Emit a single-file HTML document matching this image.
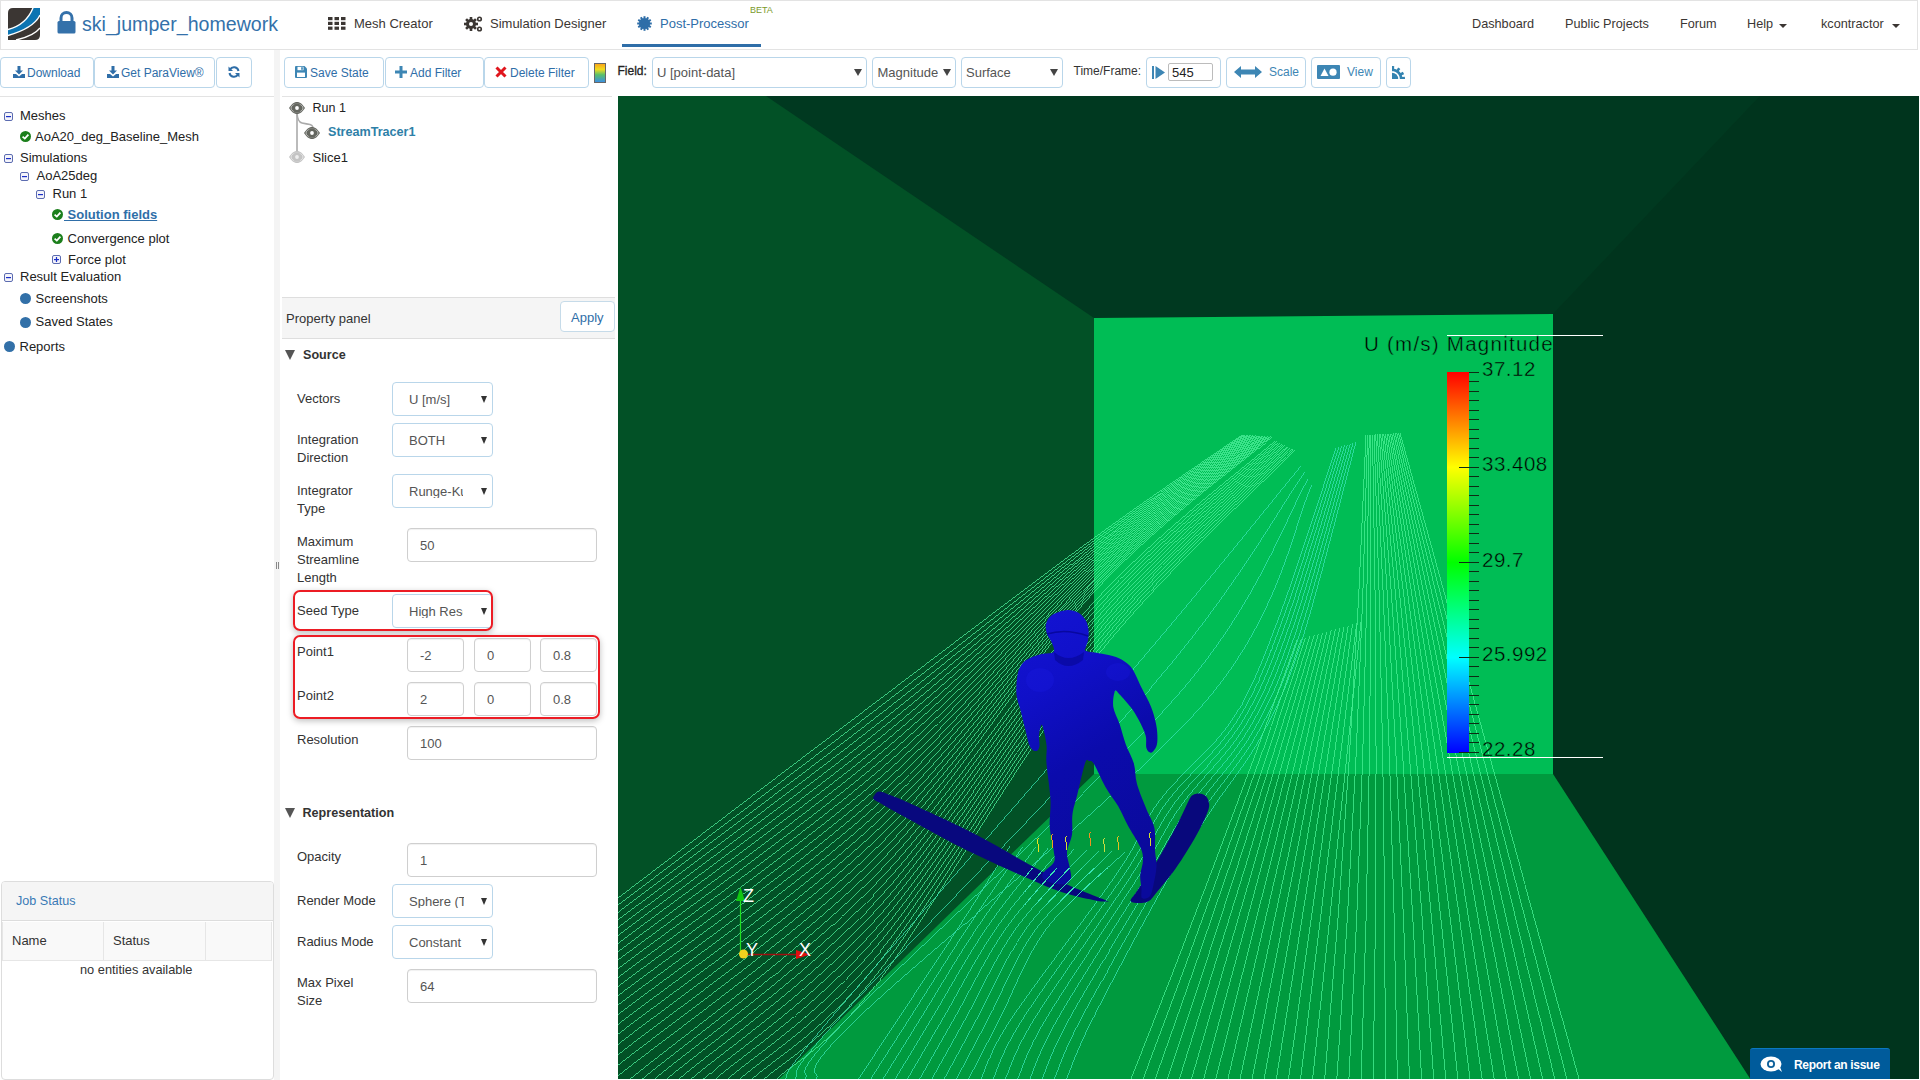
<!DOCTYPE html>
<html><head><meta charset="utf-8">
<style>
*{box-sizing:border-box}
html,body{margin:0;padding:0;width:1920px;height:1080px;overflow:hidden;background:#fff;font-family:"Liberation Sans",sans-serif;color:#333}
.a{position:absolute}
.t{position:absolute;line-height:1;white-space:nowrap}
.btn{position:absolute;border:1px solid #b9d6ea;border-radius:4px;background:#fff}
.sel{position:absolute;border:1px solid #b9d6ea;border-radius:4px;background:#fff}
.inp{position:absolute;border:1px solid #cfcfcf;border-radius:4px;background:#fff;box-shadow:inset 0 1px 1px rgba(0,0,0,.06)}
.blue{color:#2f6ea8}
.lbl{position:absolute;line-height:18px;font-size:13px;color:#333;white-space:nowrap}
.val{position:absolute;line-height:1;font-size:13px;color:#555;white-space:nowrap}
.arr{position:absolute;width:0;height:0;border-left:3.5px solid transparent;border-right:3.5px solid transparent;border-top:7px solid #333}
</style></head><body>

<!-- ================= HEADER ================= -->
<div class="a" style="left:0;top:0;width:1918px;height:50px;border:1px solid #e3e3e3;border-bottom:1px solid #e3e3e3;background:#fff"></div>
<!-- logo -->
<svg class="a" style="left:8px;top:8px" width="32" height="32" viewBox="0 0 32 32">
  <path d="M0 5 Q0 0 5 0 H32 V27 Q32 32 27 32 H0 Z" fill="#3b3633"/>
  <path d="M0 21.5 Q18 17 25 0 H32 V7 Q26 20 0 27.5 Z" fill="#0b74b2"/>
  <path d="M0 21.5 Q18 17 25 0" stroke="#fff" stroke-width="1.4" fill="none"/>
  <path d="M0 27.5 Q26 20 32 7" stroke="#fff" stroke-width="1.4" fill="none"/>
  <path d="M8 32 Q26 28 32 20" stroke="#fff" stroke-width="1.3" fill="none"/>
</svg>
<!-- lock -->
<svg class="a" style="left:57px;top:11px" width="19" height="23" viewBox="0 0 19 23">
  <path d="M4 10 V7 A5.5 5.5 0 0 1 15 7 V10" stroke="#3471aa" stroke-width="3" fill="none"/>
  <rect x="0.5" y="10" width="18" height="12.5" rx="1.5" fill="#3471aa"/>
</svg>
<div class="t" style="left:82px;top:15.2px;font-size:19.6px;color:#3471aa">ski_jumper_homework</div>

<!-- nav: mesh creator -->
<svg class="a" style="left:328px;top:17px" width="18" height="13" viewBox="0 0 18 13">
  <g fill="#3b3633">
  <rect x="0" y="0" width="4.5" height="3.2"/><rect x="6.5" y="0" width="4.5" height="3.2"/><rect x="13" y="0" width="4.5" height="3.2"/>
  <rect x="0" y="4.8" width="4.5" height="3.2"/><rect x="6.5" y="4.8" width="4.5" height="3.2"/><rect x="13" y="4.8" width="4.5" height="3.2"/>
  <rect x="0" y="9.6" width="4.5" height="3.2"/><rect x="6.5" y="9.6" width="4.5" height="3.2"/><rect x="13" y="9.6" width="4.5" height="3.2"/>
  </g>
</svg>
<div class="t" style="left:354px;top:16.5px;font-size:13px;color:#3b3633">Mesh Creator</div>
<!-- gears -->
<svg class="a" style="left:464px;top:15px" width="20" height="18" viewBox="0 0 20 18">
  <g fill="#3b3633">
   <circle cx="7" cy="9" r="5"/>
   <g transform="translate(7 9)"><rect x="-1.3" y="-7" width="2.6" height="14"/><rect x="-1.3" y="-7" width="2.6" height="14" transform="rotate(45)"/><rect x="-1.3" y="-7" width="2.6" height="14" transform="rotate(90)"/><rect x="-1.3" y="-7" width="2.6" height="14" transform="rotate(135)"/></g>
   <circle cx="15.5" cy="4" r="2.6"/><circle cx="15.5" cy="14" r="2.6"/>
  </g>
  <circle cx="7" cy="9" r="2" fill="#fff"/><circle cx="15.5" cy="4" r="1" fill="#fff"/><circle cx="15.5" cy="14" r="1" fill="#fff"/>
</svg>
<div class="t" style="left:490px;top:16.5px;font-size:13px;color:#3b3633">Simulation Designer</div>
<!-- post-processor -->
<svg class="a" style="left:637px;top:16px" width="15" height="15" viewBox="-7.5 -7.5 15 15">
  <g fill="#2f6ea8"><circle r="5.6"/>
  <g id="sp"><rect x="-1" y="-7.3" width="2" height="14.6"/><rect x="-1" y="-7.3" width="2" height="14.6" transform="rotate(30)"/><rect x="-1" y="-7.3" width="2" height="14.6" transform="rotate(60)"/><rect x="-1" y="-7.3" width="2" height="14.6" transform="rotate(90)"/><rect x="-1" y="-7.3" width="2" height="14.6" transform="rotate(120)"/><rect x="-1" y="-7.3" width="2" height="14.6" transform="rotate(150)"/></g></g>
</svg>
<div class="t" style="left:660px;top:16.5px;font-size:13px;color:#2f6ea8">Post-Processor</div>
<div class="t" style="left:750px;top:6px;font-size:9px;color:#7a9a2a">BETA</div>
<div class="a" style="left:622px;top:44px;width:139px;height:3px;background:#2f6ea8"></div>

<!-- right nav -->
<div class="t" style="left:1472px;top:18px;font-size:12.7px;color:#3b3633">Dashboard</div>
<div class="t" style="left:1565px;top:18px;font-size:12.7px;color:#3b3633">Public Projects</div>
<div class="t" style="left:1680px;top:18px;font-size:12.7px;color:#3b3633">Forum</div>
<div class="t" style="left:1747px;top:18px;font-size:12.7px;color:#3b3633">Help</div>
<div class="arr" style="left:1779px;top:24px;border-top-width:4px;border-left-width:4px;border-right-width:4px;border-top-color:#3b3633"></div>
<div class="t" style="left:1821px;top:18px;font-size:12.7px;color:#3b3633">kcontractor</div>
<div class="arr" style="left:1892px;top:24px;border-top-width:4px;border-left-width:4px;border-right-width:4px;border-top-color:#3b3633"></div>

<!-- ================= LEFT PANEL ================= -->
<div class="a" style="left:274px;top:50px;width:6px;height:1030px;background:#f4f4f4"></div>
<div class="a" style="left:0;top:96px;width:274px;height:1px;background:#e3e3e3"></div>

<!-- toolbar buttons -->
<div class="btn" style="left:0;top:57px;width:94px;height:31px"></div>
<svg class="a" style="left:13px;top:66px" width="12" height="12" viewBox="0 0 12 12"><path d="M4.5 0 H7.5 V4.5 H10 L6 8.5 L2 4.5 H4.5 Z" fill="#2f6ea8"/><path d="M0 8 H3 L6 10.5 L9 8 H12 V12 H0 Z" fill="#2f6ea8"/></svg>
<div class="t blue" style="left:27px;top:67px;font-size:12px">Download</div>
<div class="btn" style="left:94px;top:57px;width:121px;height:31px"></div>
<svg class="a" style="left:107px;top:66px" width="12" height="12" viewBox="0 0 12 12"><path d="M4.5 0 H7.5 V4.5 H10 L6 8.5 L2 4.5 H4.5 Z" fill="#2f6ea8"/><path d="M0 8 H3 L6 10.5 L9 8 H12 V12 H0 Z" fill="#2f6ea8"/></svg>
<div class="t blue" style="left:121px;top:67px;font-size:12px">Get ParaView®</div>
<div class="btn" style="left:216px;top:57px;width:36px;height:31px"></div>
<svg class="a" style="left:228px;top:66px" width="12" height="12" viewBox="0 0 12 12"><path d="M10.5 5 A4.6 4.6 0 0 0 2 3.5" stroke="#2f6ea8" stroke-width="2" fill="none"/><path d="M0.5 0.5 V5 H5 Z" fill="#2f6ea8"/><path d="M1.5 7 A4.6 4.6 0 0 0 10 8.5" stroke="#2f6ea8" stroke-width="2" fill="none"/><path d="M11.5 11.5 V7 H7 Z" fill="#2f6ea8"/></svg>

<!-- tree -->
<svg width="0" height="0" style="position:absolute"><defs>
 <g id="minus"><rect x="0.5" y="0.5" width="8" height="8" rx="1.5" fill="#f4f4fa" stroke="#5c6cb0" stroke-width="1"/><rect x="2" y="4" width="5" height="1.2" fill="#1b2fc8"/></g>
 <g id="plus"><rect x="0.5" y="0.5" width="8" height="8" rx="1.5" fill="#f4f4fa" stroke="#5c6cb0" stroke-width="1"/><rect x="2" y="4" width="5" height="1.2" fill="#1b2fc8"/><rect x="3.9" y="2" width="1.2" height="5" fill="#1b2fc8"/></g>
 <g id="chk"><circle cx="5.5" cy="5.5" r="5.5" fill="#1c7f1c"/><path d="M2.6 5.6 L4.8 7.6 L8.4 3.6" stroke="#fff" stroke-width="1.8" fill="none"/></g>
</defs></svg>
<svg class="a" style="left:4px;top:112px" width="9" height="9"><use href="#minus"/></svg>
<div class="t" style="left:20px;top:108.6px;font-size:13px;color:#222">Meshes</div>
<svg class="a" style="left:20px;top:131px" width="11" height="11"><use href="#chk"/></svg>
<div class="t" style="left:35px;top:129.7px;font-size:13px;color:#222">AoA20_deg_Baseline_Mesh</div>
<svg class="a" style="left:4px;top:154px" width="9" height="9"><use href="#minus"/></svg>
<div class="t" style="left:20px;top:150.6px;font-size:13px;color:#222">Simulations</div>
<svg class="a" style="left:20px;top:172px" width="9" height="9"><use href="#minus"/></svg>
<div class="t" style="left:36.5px;top:168.6px;font-size:13px;color:#222">AoA25deg</div>
<svg class="a" style="left:36px;top:190px" width="9" height="9"><use href="#minus"/></svg>
<div class="t" style="left:52.5px;top:186.7px;font-size:13px;color:#222">Run 1</div>
<svg class="a" style="left:52px;top:208.5px" width="11" height="11"><use href="#chk"/></svg>
<div class="t" style="left:64px;top:207.8px;font-size:13px;color:#2f6ea8;font-weight:bold;text-decoration:underline">&nbsp;Solution fields</div>
<svg class="a" style="left:52px;top:232.5px" width="11" height="11"><use href="#chk"/></svg>
<div class="t" style="left:67.5px;top:231.5px;font-size:13px;color:#222">Convergence plot</div>
<svg class="a" style="left:52px;top:255px" width="9" height="9"><use href="#plus"/></svg>
<div class="t" style="left:68px;top:252.7px;font-size:13px;color:#222">Force plot</div>
<svg class="a" style="left:4px;top:273px" width="9" height="9"><use href="#minus"/></svg>
<div class="t" style="left:20px;top:270.2px;font-size:13px;color:#222">Result Evaluation</div>
<div class="a" style="left:20px;top:292.5px;width:11px;height:11px;border-radius:50%;background:#3270a8"></div>
<div class="t" style="left:35.5px;top:291.5px;font-size:13px;color:#222">Screenshots</div>
<div class="a" style="left:20px;top:316.5px;width:11px;height:11px;border-radius:50%;background:#3270a8"></div>
<div class="t" style="left:35.5px;top:315.2px;font-size:13px;color:#222">Saved States</div>
<div class="a" style="left:4px;top:340.5px;width:11px;height:11px;border-radius:50%;background:#3270a8"></div>
<div class="t" style="left:19.5px;top:339.5px;font-size:13px;color:#222">Reports</div>

<!-- job status -->
<div class="a" style="left:1px;top:881px;width:273px;height:199px;border:1px solid #dddddd;border-radius:4px;background:#fff;overflow:hidden">
  <div class="a" style="left:0;top:0;width:271px;height:39px;background:#f5f5f5;border-bottom:1px solid #dddddd"></div>
  <div class="a" style="left:0;top:40px;width:270px;height:39px;background:#f9f9f9;border-bottom:1px solid #e6e6e6"></div>
  <div class="a" style="left:101px;top:40px;width:1px;height:39px;background:#e6e6e6"></div>
  <div class="a" style="left:203px;top:40px;width:1px;height:39px;background:#e6e6e6"></div>
  <div class="a" style="left:269px;top:40px;width:1px;height:39px;background:#e6e6e6"></div>
  <div class="a" style="left:0;top:40px;width:1px;height:39px;background:#e6e6e6"></div>
</div>
<div class="t" style="left:16px;top:895px;font-size:12.6px;color:#3a7ab5">Job Status</div>
<div class="t" style="left:12px;top:933.5px;font-size:13px;color:#333">Name</div>
<div class="t" style="left:113px;top:933.5px;font-size:13px;color:#333">Status</div>
<div class="t" style="left:80px;top:963.5px;font-size:12.8px;color:#333">no entities available</div>


<!-- ================= MIDDLE PANEL ================= -->
<div class="a" style="left:282px;top:96px;width:330px;height:1px;background:#e3e3e3"></div>

<!-- toolbar -->
<div class="btn" style="left:284px;top:57px;width:100px;height:31px"></div>
<svg class="a" style="left:295px;top:66px" width="12" height="12" viewBox="0 0 12 12"><path d="M0 1 Q0 0 1 0 H9.5 L12 2.5 V11 Q12 12 11 12 H1 Q0 12 0 11 Z" fill="#3d86b4"/><rect x="2.5" y="0.8" width="6" height="3.4" fill="#fff"/><rect x="6.2" y="1.2" width="1.6" height="2.6" fill="#3d86b4"/><rect x="2" y="6.6" width="8" height="4.4" fill="#fff"/></svg>
<div class="t blue" style="left:310px;top:67px;font-size:12px">Save State</div>
<div class="btn" style="left:385px;top:57px;width:99px;height:31px"></div>
<svg class="a" style="left:395px;top:66px" width="12" height="12" viewBox="0 0 12 12"><rect x="4.5" y="0" width="3" height="12" fill="#3d86b4"/><rect x="0" y="4.5" width="12" height="3" fill="#3d86b4"/></svg>
<div class="t blue" style="left:410px;top:67px;font-size:12px">Add Filter</div>
<div class="btn" style="left:484px;top:57px;width:105px;height:31px"></div>
<svg class="a" style="left:495px;top:66px" width="12" height="12" viewBox="0 0 12 12"><path d="M1.5 1.5 L10.5 10.5 M10.5 1.5 L1.5 10.5" stroke="#e0161d" stroke-width="3"/></svg>
<div class="t blue" style="left:510px;top:67px;font-size:12px">Delete Filter</div>
<div class="a" style="left:594px;top:63px;width:12px;height:20px;border:1px solid #666;background:linear-gradient(#f9a61b,#f2dc1f 30%,#58c06a 60%,#3c8fe0 100%)"></div>

<!-- pipeline tree -->
<svg class="a" style="left:286px;top:98px" width="40" height="70" viewBox="0 0 40 70">
  <path d="M11 15 V54" stroke="#aaa" stroke-width="1.6" fill="none"/>
  <path d="M11 15 Q11.5 24 16 25 Q21 26 24 26.5 Q26 27 27 29" stroke="#aaa" stroke-width="1.6" fill="none"/>
</svg>
<svg width="0" height="0" style="position:absolute"><defs>
 <g id="eye"><path d="M0 6 C3 1.5 5.5 0 8 0 C10.5 0 13 1.5 16 6 C13 10.5 10.5 12 8 12 C5.5 12 3 10.5 0 6Z" fill="#656760"/><ellipse cx="8" cy="6" rx="6" ry="4" fill="none" stroke="#fff" stroke-width="0.7" stroke-opacity="0.8"/><circle cx="8" cy="6" r="4.5" fill="#656760"/><circle cx="8" cy="6" r="1.9" fill="#fff"/></g>
 <g id="eyeg"><path d="M0 6 C3 1.5 5.5 0 8 0 C10.5 0 13 1.5 16 6 C13 10.5 10.5 12 8 12 C5.5 12 3 10.5 0 6Z" fill="#c4c4c4"/><ellipse cx="8" cy="6" rx="6" ry="4" fill="none" stroke="#fff" stroke-width="0.7" stroke-opacity="0.8"/><circle cx="8" cy="6" r="4.5" fill="#c4c4c4"/><circle cx="8" cy="6" r="1.9" fill="#eee"/></g>
</defs></svg>
<svg class="a" style="left:289.3px;top:101.5px" width="16" height="12"><use href="#eye"/></svg>
<div class="t" style="left:312.5px;top:101.5px;font-size:12.5px;color:#222">Run 1</div>
<svg class="a" style="left:304.4px;top:126.5px" width="16" height="12"><use href="#eye"/></svg>
<div class="t" style="left:328px;top:126px;font-size:12.6px;color:#2e80a8;font-weight:bold">StreamTracer1</div>
<svg class="a" style="left:289.3px;top:151px" width="16" height="12"><use href="#eyeg"/></svg>
<div class="t" style="left:312.5px;top:151px;font-size:13px;color:#222">Slice1</div>

<!-- property panel header -->
<div class="a" style="left:282px;top:297px;width:333px;height:42px;background:#f5f5f5;border-top:1px solid #dedede;border-bottom:1px solid #dedede"></div>
<div class="t" style="left:286px;top:311.5px;font-size:13px;color:#333">Property panel</div>
<div class="btn" style="left:560px;top:301px;width:55px;height:31px;border-color:#c6dbe9"></div>
<div class="t blue" style="left:571px;top:310.5px;font-size:13px">Apply</div>

<!-- source section -->
<div class="arr" style="left:285px;top:350px;border-left-width:5.5px;border-right-width:5.5px;border-top-width:10px;border-top-color:#555"></div>
<div class="t" style="left:303px;top:349.2px;font-size:12.6px;color:#333;font-weight:bold">Source</div>

<div class="lbl" style="left:297px;top:389.5px">Vectors</div>
<div class="sel" style="left:392px;top:382px;width:101px;height:34px"></div>
<div class="val" style="left:409px;top:393px">U [m/s]</div>
<div class="arr" style="left:481px;top:396px"></div>

<div class="lbl" style="left:297px;top:430.5px">Integration<br>Direction</div>
<div class="sel" style="left:392px;top:423px;width:101px;height:34px"></div>
<div class="val" style="left:409px;top:434px">BOTH</div>
<div class="arr" style="left:481px;top:437px"></div>

<div class="lbl" style="left:297px;top:481.5px">Integrator<br>Type</div>
<div class="sel" style="left:392px;top:474px;width:101px;height:34px"></div>
<div class="val" style="left:409px;top:485px;width:54px;overflow:hidden">Runge-Kutta</div>
<div class="arr" style="left:481px;top:488px"></div>

<div class="lbl" style="left:297px;top:532.5px">Maximum<br>Streamline<br>Length</div>
<div class="inp" style="left:407px;top:528px;width:190px;height:34px"></div>
<div class="val" style="left:420px;top:539px">50</div>

<div class="lbl" style="left:297px;top:601.5px">Seed Type</div>
<div class="sel" style="left:392px;top:594px;width:101px;height:34px"></div>
<div class="val" style="left:409px;top:605px;width:54px;overflow:hidden">High Resolution</div>
<div class="arr" style="left:481px;top:608px"></div>

<div class="lbl" style="left:297px;top:642.5px">Point1</div>
<div class="inp" style="left:407px;top:638px;width:57px;height:34px"></div>
<div class="val" style="left:420px;top:649px">-2</div>
<div class="inp" style="left:474px;top:638px;width:57px;height:34px"></div>
<div class="val" style="left:487px;top:649px">0</div>
<div class="inp" style="left:540px;top:638px;width:57px;height:34px"></div>
<div class="val" style="left:553px;top:649px">0.8</div>

<div class="lbl" style="left:297px;top:686.5px">Point2</div>
<div class="inp" style="left:407px;top:682px;width:57px;height:34px"></div>
<div class="val" style="left:420px;top:693px">2</div>
<div class="inp" style="left:474px;top:682px;width:57px;height:34px"></div>
<div class="val" style="left:487px;top:693px">0</div>
<div class="inp" style="left:540px;top:682px;width:57px;height:34px"></div>
<div class="val" style="left:553px;top:693px">0.8</div>

<div class="lbl" style="left:297px;top:730.5px">Resolution</div>
<div class="inp" style="left:407px;top:726px;width:190px;height:34px"></div>
<div class="val" style="left:420px;top:737px">100</div>

<!-- red highlight boxes -->
<div class="a" style="left:292.5px;top:590px;width:200px;height:41px;border:2px solid #ec1c24;border-radius:7px;box-shadow:0 2px 6px rgba(0,0,0,.25)"></div>
<div class="a" style="left:292.5px;top:635px;width:307.5px;height:84px;border:2px solid #ec1c24;border-radius:7px;box-shadow:0 2px 6px rgba(0,0,0,.25)"></div>

<!-- representation -->
<div class="arr" style="left:285px;top:808px;border-left-width:5.5px;border-right-width:5.5px;border-top-width:10px;border-top-color:#555"></div>
<div class="t" style="left:302.5px;top:807px;font-size:12.6px;color:#333;font-weight:bold">Representation</div>

<div class="lbl" style="left:297px;top:847.5px">Opacity</div>
<div class="inp" style="left:407px;top:843px;width:190px;height:34px"></div>
<div class="val" style="left:420px;top:854px">1</div>

<div class="lbl" style="left:297px;top:891.5px">Render Mode</div>
<div class="sel" style="left:392px;top:884px;width:101px;height:34px"></div>
<div class="val" style="left:409px;top:895px;width:55px;overflow:hidden">Sphere (Texture)</div>
<div class="arr" style="left:481px;top:898px"></div>

<div class="lbl" style="left:297px;top:932.5px">Radius Mode</div>
<div class="sel" style="left:392px;top:925px;width:101px;height:34px"></div>
<div class="val" style="left:409px;top:936px">Constant</div>
<div class="arr" style="left:481px;top:939px"></div>

<div class="lbl" style="left:297px;top:973.5px">Max Pixel<br>Size</div>
<div class="inp" style="left:407px;top:969px;width:190px;height:34px"></div>
<div class="val" style="left:420px;top:980px">64</div>

<!-- resize handle -->
<div class="a" style="left:276px;top:562px;width:1px;height:7px;background:#888"></div>
<div class="a" style="left:278px;top:562px;width:1px;height:7px;background:#888"></div>

<!-- field toolbar -->
<div class="t" style="left:617.5px;top:65px;font-size:12px;color:#222;-webkit-text-stroke:0.3px #222">Field:</div>
<div class="sel" style="left:652px;top:57px;width:215px;height:31px"></div>
<div class="val" style="left:657px;top:65.5px">U [point-data]</div>
<div class="arr" style="left:854px;top:69px;border-left-width:4px;border-right-width:4px;border-top-width:7px;border-top-color:#444"></div>
<div class="sel" style="left:872px;top:57px;width:84px;height:31px"></div>
<div class="val" style="left:877.5px;top:65.5px">Magnitude</div>
<div class="arr" style="left:943px;top:69px;border-left-width:4px;border-right-width:4px;border-top-width:7px;border-top-color:#444"></div>
<div class="sel" style="left:961px;top:57px;width:102px;height:31px"></div>
<div class="val" style="left:966px;top:65.5px">Surface</div>
<div class="arr" style="left:1050px;top:69px;border-left-width:4px;border-right-width:4px;border-top-width:7px;border-top-color:#444"></div>
<div class="t" style="left:1073.5px;top:65px;font-size:12px;color:#333">Time/Frame:</div>
<div class="btn" style="left:1146px;top:57px;width:75px;height:31px"></div>
<svg class="a" style="left:1152px;top:66px" width="14" height="13" viewBox="0 0 14 13"><rect x="0" y="0" width="2" height="13" fill="#3d86b4"/><path d="M3.5 0 L13 6.5 L3.5 13 Z" fill="#3d86b4"/></svg>
<div class="a" style="left:1168px;top:63px;width:45px;height:18px;border:1px solid #bcbcbc;border-radius:2px"></div>
<div class="t" style="left:1172px;top:66px;font-size:13px;color:#222">545</div>
<div class="btn" style="left:1226px;top:57px;width:80px;height:31px"></div>
<svg class="a" style="left:1234px;top:66px" width="28" height="12" viewBox="0 0 28 12"><path d="M0 6 L7 0 V3.5 H21 V0 L28 6 L21 12 V8.5 H7 V12 Z" fill="#3d86b4"/></svg>
<div class="t" style="left:1269px;top:66px;font-size:12px;color:#3d86b4">Scale</div>
<div class="btn" style="left:1311px;top:57px;width:70px;height:31px"></div>
<svg class="a" style="left:1317px;top:65px" width="23" height="14" viewBox="0 0 23 14"><rect width="23" height="14" rx="1" fill="#3d86b4"/><path d="M3.5 11 L7.5 3.5 L11.5 11 Z" fill="#fff"/><circle cx="16" cy="7.2" r="3.6" fill="#fff"/></svg>
<div class="t" style="left:1347px;top:66px;font-size:12px;color:#3d86b4">View</div>
<div class="btn" style="left:1386px;top:57px;width:25px;height:31px"></div>
<svg class="a" style="left:1392px;top:66px" width="14" height="14" viewBox="0 0 14 14"><path d="M0.00 0.00 L0.23 0.00 L0.45 0.01 L0.68 0.02 L0.91 0.03 L1.13 0.05 L1.36 0.07 L1.58 0.10 L1.81 0.13 L2.03 0.16 L2.26 0.20 L2.00 2.69 L2.18 2.73 L2.36 2.77 L2.54 2.81 L2.72 2.86 L2.89 2.91 L3.07 2.96 L3.24 3.01 L3.42 3.07 L3.59 3.13 L3.76 3.20 L3.93 3.26 L4.10 3.33 L4.27 3.41 L4.44 3.48 L4.60 3.56 L4.77 3.64 L6.10 1.52 L6.30 1.63 L6.50 1.74 L6.70 1.86 L6.89 1.98 L7.08 2.10 L7.27 2.22 L7.46 2.35 L7.64 2.48 L7.82 2.62 L8.00 2.76 L8.18 2.90 L8.36 3.04 L6.89 5.08 L7.03 5.20 L7.16 5.32 L7.29 5.45 L7.42 5.58 L7.55 5.71 L7.68 5.84 L7.80 5.97 L7.92 6.11 L8.04 6.25 L8.16 6.39 L8.27 6.54 L8.39 6.68 L8.49 6.83 L8.60 6.98 L10.78 5.73 L10.90 5.92 L11.02 6.11 L11.14 6.30 L11.26 6.50 L11.37 6.70 L11.48 6.90 L11.58 7.10 L11.68 7.30 L11.78 7.51 L11.88 7.71 L11.97 7.92 L12.05 8.13 L9.80 9.24 L9.87 9.41 L9.93 9.58 L9.99 9.76 L10.04 9.93 L10.09 10.11 L10.14 10.28 L10.19 10.46 L10.23 10.64 L10.27 10.82 L10.31 11.00 L12.80 10.74 L12.84 10.97 L12.87 11.19 L12.90 11.42 L12.93 11.64 L12.95 11.87 L12.97 12.09 L12.98 12.32 L12.99 12.55 L13.00 12.77 L13.00 13.00 L7.80 13.00 L7.79 12.59 L7.76 12.18 L7.70 11.78 L7.63 11.38 L7.53 10.98 L7.42 10.59 L7.28 10.20 L7.13 9.83 L6.95 9.46 L6.75 9.10 L6.54 8.75 L6.31 8.42 L6.06 8.09 L5.80 7.78 L5.52 7.48 L5.22 7.20 L4.91 6.94 L4.58 6.69 L4.25 6.46 L3.90 6.25 L3.54 6.05 L3.17 5.87 L2.80 5.72 L2.41 5.58 L2.02 5.47 L1.62 5.37 L1.22 5.30 L0.82 5.24 L0.41 5.21 L0.00 5.20Z" fill="#3383b0"/><path d="M0 13 V6.8 A6.2 6.2 0 0 1 6.2 13 Z" fill="#3383b0"/></svg>


<!-- ================= VIEWPORT ================= -->
<svg class="a" style="left:618px;top:96px" width="1301" height="983" viewBox="618 96 1301 983" shape-rendering="geometricPrecision">
  <rect x="618" y="96" width="1302" height="984" fill="#003920"/>
  <!-- right wall -->
  <polygon points="1553,314 1760,96 1920,96 1920,1080 1751,1080 1553,774" fill="#00341d"/>
  <!-- left wall -->
  <polygon points="618,96 766,96 1094,318 1094,774 778,1080 618,1080" fill="#025126"/>
  <!-- back wall -->
  <polygon points="1094,318 1553,314 1553,774 1094,774" fill="#00bd55"/>
  <!-- floor -->
  <polygon points="1094,774 1553,774 1751,1080 778,1080" fill="#009a3e"/>
  <g fill="none" stroke-width="0.75" shape-rendering="crispEdges"><path d="M618.0 898.0 C661.7 864.8 800.7 759.0 880.0 699.0 C959.3 639.0 1033.7 582.0 1094.0 538.0 C1154.3 494.0 1217.3 452.2 1242.0 435.0 M618.0 905.1 C661.7 872.0 800.7 767.4 880.0 706.6 C959.3 645.9 1033.4 586.0 1094.0 540.7 C1154.6 495.4 1218.6 452.7 1243.5 435.1 M618.0 912.4 C661.7 879.4 800.7 775.8 880.0 714.3 C959.3 652.8 1033.2 589.9 1094.0 543.4 C1154.8 496.9 1219.8 453.2 1245.0 435.2 M618.0 919.9 C661.7 886.9 800.7 784.3 880.0 722.0 C959.3 659.8 1032.9 593.9 1094.0 546.1 C1155.1 498.3 1221.1 453.8 1246.5 435.3 M618.0 927.5 C661.7 894.6 800.7 793.0 880.0 729.8 C959.3 666.7 1032.7 597.9 1094.0 548.8 C1155.3 499.7 1222.3 454.3 1248.0 435.4 M618.0 935.4 C661.7 902.4 800.7 801.7 880.0 737.7 C959.3 673.7 1032.4 601.9 1094.0 551.5 C1155.6 501.1 1223.6 454.8 1249.5 435.5 M618.0 943.4 C661.7 910.4 800.7 810.5 880.0 745.6 C959.3 680.7 1032.2 605.9 1094.0 554.2 C1155.8 502.5 1224.8 455.4 1251.0 435.6 M618.0 951.7 C661.7 918.6 800.7 819.3 880.0 753.5 C959.3 687.7 1031.9 609.9 1094.0 556.9 C1156.1 503.9 1226.1 455.9 1252.5 435.7 M618.0 960.1 C661.7 927.0 800.7 828.3 880.0 761.5 C959.3 694.8 1031.7 613.9 1094.0 559.6 C1156.3 505.3 1227.3 456.4 1254.0 435.8 M618.0 968.7 C661.7 935.5 800.7 837.3 880.0 769.6 C959.3 701.9 1031.4 617.9 1094.0 562.3 C1156.6 506.7 1228.6 457.0 1255.5 435.9 M618.0 977.5 C661.7 944.2 800.7 846.5 880.0 777.7 C959.3 709.0 1031.2 622.0 1094.0 565.0 C1156.8 508.0 1229.8 457.5 1257.0 436.0 M618.0 986.5 C661.7 953.1 800.7 855.7 880.0 785.9 C959.3 716.1 1030.9 626.0 1094.0 567.7 C1157.1 509.4 1231.1 458.0 1258.5 436.1 M618.0 995.7 C661.7 962.1 800.7 865.0 880.0 794.1 C959.3 723.2 1030.7 630.1 1094.0 570.4 C1157.3 510.7 1232.3 458.6 1260.0 436.2 M618.0 1005.1 C661.7 971.3 800.7 874.4 880.0 802.4 C959.3 730.4 1030.4 634.1 1094.0 573.1 C1157.6 512.1 1233.6 459.1 1261.5 436.3 M618.0 1014.6 C661.7 980.6 800.7 883.9 880.0 810.7 C959.3 737.6 1030.2 638.2 1094.0 575.8 C1157.8 513.4 1234.8 459.6 1263.0 436.4 M618.0 1024.4 C661.7 990.2 800.7 893.4 880.0 819.1 C959.3 744.8 1029.9 642.3 1094.0 578.5 C1158.1 514.7 1236.1 460.2 1264.5 436.5 M618.0 1034.3 C661.7 999.9 800.7 903.1 880.0 827.6 C959.3 752.1 1029.7 646.4 1094.0 581.2 C1158.3 516.0 1237.3 460.7 1266.0 436.6 M618.0 1044.5 C661.7 1009.7 800.7 912.8 880.0 836.1 C959.3 759.3 1029.4 650.5 1094.0 583.9 C1158.6 517.3 1238.6 461.2 1267.5 436.7 M618.0 1054.8 C661.7 1019.8 800.7 922.7 880.0 844.6 C959.3 766.6 1029.2 654.6 1094.0 586.6 C1158.8 518.6 1239.8 461.8 1269.0 436.8 M618.0 1065.3 C661.7 1030.0 800.7 932.6 880.0 853.2 C959.3 773.9 1028.9 658.7 1094.0 589.3 C1159.1 519.9 1241.1 462.3 1270.5 436.9 M618.0 1076.0 C661.7 1040.3 800.7 942.6 880.0 861.9 C959.3 781.2 1028.7 662.8 1094.0 592.0 C1159.3 521.2 1242.3 462.8 1272.0 437.0 M630.2 1079.0 C671.8 1044.3 802.7 950.1 880.0 870.6 C957.3 791.1 1028.2 673.6 1094.0 602.0 C1159.8 530.4 1244.8 467.8 1275.0 441.0 M642.4 1079.0 C682.0 1045.7 804.7 958.1 880.0 879.4 C955.3 800.7 1027.9 679.8 1094.0 606.8 C1160.1 533.9 1246.2 469.3 1276.7 441.8 M654.6 1079.0 C692.2 1047.2 806.8 966.1 880.0 888.2 C953.2 810.3 1027.6 686.0 1094.0 611.7 C1160.4 537.4 1247.6 470.7 1278.3 442.5 M666.8 1079.0 C702.3 1048.7 808.8 974.2 880.0 897.1 C951.2 820.0 1027.3 692.1 1094.0 616.5 C1160.7 540.9 1249.0 472.1 1280.0 443.2 M679.0 1079.0 C712.5 1050.2 810.8 982.3 880.0 906.0 C949.2 829.8 1027.1 698.3 1094.0 621.3 C1160.9 544.3 1250.4 473.6 1281.7 444.0 M691.2 1079.0 C722.7 1051.7 812.9 990.5 880.0 915.0 C947.1 839.6 1026.8 704.5 1094.0 626.2 C1161.2 547.8 1251.8 475.0 1283.3 444.8 M703.4 1079.0 C732.8 1053.2 814.9 998.7 880.0 924.1 C945.1 849.4 1026.5 710.8 1094.0 631.0 C1161.5 551.2 1253.2 476.4 1285.0 445.5 M715.6 1079.0 C743.0 1054.7 816.9 1007.0 880.0 933.2 C943.1 859.3 1026.2 717.0 1094.0 635.8 C1161.8 554.7 1254.6 477.8 1286.7 446.2 M727.8 1079.0 C753.2 1056.2 819.0 1015.4 880.0 942.3 C941.0 869.3 1025.9 723.2 1094.0 640.7 C1162.1 558.1 1255.9 479.3 1288.3 447.0 M740.0 1079.0 C763.3 1057.8 821.0 1023.8 880.0 951.5 C939.0 879.3 1025.7 729.5 1094.0 645.5 C1162.3 561.5 1257.3 480.7 1290.0 447.8 M752.2 1079.0 C773.5 1059.3 823.0 1032.3 880.0 960.8 C937.0 889.4 1025.4 735.7 1094.0 650.3 C1162.6 564.9 1258.7 482.1 1291.7 448.5 M764.4 1079.0 C783.7 1060.9 825.1 1040.8 880.0 970.1 C934.9 899.5 1025.1 742.0 1094.0 655.2 C1162.9 568.4 1260.1 483.6 1293.3 449.2 M776.6 1079.0 C793.8 1062.4 827.1 1049.3 880.0 979.5 C932.9 909.7 1024.8 748.2 1094.0 660.0 C1163.2 571.8 1261.5 485.0 1295.0 450.0" stroke="#4ef09c"/><path d="M785.0 1079.0 C792.5 1069.0 771.6 1087.8 830.1 1019.0 C888.6 950.2 1057.5 758.2 1136.0 666.0 C1214.5 573.8 1273.5 499.3 1301.0 466.0 M795.0 1079.0 C802.3 1069.0 777.9 1085.9 838.6 1019.0 C899.3 952.1 1081.7 768.8 1159.3 677.7 C1237.0 586.6 1280.4 506.6 1304.7 472.3 M805.0 1079.0 C812.0 1069.0 784.2 1083.9 847.2 1019.0 C910.1 954.1 1105.8 779.4 1182.7 689.3 C1259.5 599.3 1287.4 513.8 1308.3 478.7 M816.0 1079.0 C822.8 1069.0 791.9 1082.0 856.9 1019.0 C921.9 956.0 1130.1 790.0 1206.0 701.0 C1281.9 612.0 1294.3 521.0 1312.0 485.0 M858.5 1079.0 C865.1 1069.0 881.6 1044.0 898.1 1019.0 C914.6 994.0 938.9 957.8 957.5 929.0 C976.2 900.2 1001.3 859.8 1010.0 846.0 M870.7 1079.0 C877.1 1069.0 893.2 1044.0 909.2 1019.0 C925.2 994.0 947.9 957.7 966.8 929.0 C985.8 900.3 1013.5 860.4 1022.8 846.7 M883.0 1079.0 C889.2 1069.0 904.7 1044.0 920.3 1019.0 C935.9 994.0 957.1 957.6 976.3 929.0 C995.5 900.4 1025.7 860.9 1035.6 847.3 M895.2 1079.0 C901.3 1069.0 916.4 1044.0 931.5 1019.0 C946.6 994.0 966.5 957.5 985.9 929.0 C1005.4 900.5 1037.9 861.5 1048.3 848.0 M907.4 1079.0 C913.3 1069.0 928.0 1044.0 942.7 1019.0 C957.5 994.0 976.0 957.4 995.7 929.0 C1015.4 900.6 1050.2 862.1 1061.1 848.7 M919.7 1079.0 C925.4 1069.0 939.7 1044.0 954.0 1019.0 C968.4 994.0 985.6 957.3 1005.6 929.0 C1025.6 900.7 1062.5 862.6 1073.9 849.3 M931.9 1079.0 C937.5 1069.0 951.4 1044.0 965.4 1019.0 C979.3 994.0 995.4 957.2 1015.6 929.0 C1035.8 900.8 1074.8 863.2 1086.7 850.0 M944.1 1079.0 C949.6 1069.0 963.2 1044.0 976.8 1019.0 C990.4 994.0 1005.3 957.1 1025.8 929.0 C1046.2 900.9 1087.2 863.7 1099.4 850.7 M956.4 1079.0 C961.7 1069.0 975.0 1044.0 988.2 1019.0 C1001.5 994.0 1015.3 956.9 1036.0 929.0 C1056.7 901.1 1099.5 864.3 1112.2 851.3 M968.6 1079.0 C973.8 1069.0 986.7 1044.0 999.7 1019.0 C1012.6 994.0 1025.4 956.8 1046.3 929.0 C1067.2 901.2 1111.9 864.8 1125.0 852.0 M980.9 1079.0 C985.9 1069.0 988.3 1053.5 1011.2 1019.0 C1034.1 984.5 1093.2 908.5 1118.0 872.0 C1142.8 835.5 1141.0 825.3 1160.0 800.0 C1179.0 774.7 1212.3 750.0 1232.0 720.0 C1251.7 690.0 1260.7 665.3 1278.0 620.0 C1295.3 574.7 1326.3 476.7 1336.0 448.0 M993.1 1079.0 C998.0 1069.0 1000.8 1053.2 1022.7 1019.0 C1044.7 984.8 1100.6 909.9 1124.7 873.7 C1148.8 837.5 1148.5 827.0 1167.1 801.7 C1185.7 776.5 1217.2 752.0 1236.3 722.1 C1255.3 692.3 1264.3 668.7 1281.4 622.9 C1298.5 577.0 1329.3 476.4 1338.9 447.1 M1005.3 1079.0 C1010.2 1069.0 1013.3 1052.9 1034.3 1019.0 C1055.3 985.1 1108.1 911.4 1131.4 875.4 C1154.8 839.5 1156.1 828.6 1174.3 803.4 C1192.5 778.2 1222.1 753.9 1240.6 724.3 C1259.0 694.7 1268.0 672.0 1284.9 625.7 C1301.7 579.4 1332.2 476.2 1341.7 446.3 M1017.6 1079.0 C1022.3 1069.0 1025.8 1052.6 1045.9 1019.0 C1066.0 985.4 1115.6 912.8 1138.1 877.1 C1160.7 841.5 1163.6 830.3 1181.4 805.1 C1199.2 780.0 1227.0 755.9 1244.9 726.4 C1262.7 697.0 1271.7 675.4 1288.3 628.6 C1304.9 581.7 1335.2 476.0 1344.6 445.4 M1029.8 1079.0 C1034.4 1069.0 1038.4 1052.4 1057.6 1019.0 C1076.7 985.6 1123.0 914.2 1144.9 878.9 C1166.7 843.5 1171.2 831.9 1188.6 806.9 C1206.0 781.8 1232.0 757.8 1249.1 728.6 C1266.3 699.3 1275.3 678.8 1291.7 631.4 C1308.1 584.1 1338.1 475.7 1347.4 444.6 M1042.0 1079.0 C1046.6 1069.0 1051.0 1052.1 1069.2 1019.0 C1087.5 985.9 1130.5 915.6 1151.6 880.6 C1172.7 845.5 1178.7 833.5 1195.7 808.6 C1212.7 783.6 1236.9 759.8 1253.4 730.7 C1270.0 701.7 1279.0 682.1 1295.1 634.3 C1311.3 586.5 1341.1 475.5 1350.3 443.7 M1054.3 1079.0 C1058.7 1069.0 1063.5 1051.8 1080.9 1019.0 C1098.2 986.2 1138.0 917.1 1158.3 882.3 C1178.6 847.5 1186.3 835.2 1202.9 810.3 C1219.4 785.4 1241.8 761.7 1257.7 732.9 C1273.7 704.0 1282.7 685.5 1298.6 637.1 C1314.5 588.8 1344.0 475.2 1353.1 442.9 M1066.5 1079.0 C1070.8 1069.0 1076.2 1051.5 1092.6 1019.0 C1109.0 986.5 1145.4 918.5 1165.0 884.0 C1184.6 849.5 1193.8 836.8 1210.0 812.0 C1226.2 787.2 1246.7 763.7 1262.0 735.0 C1277.3 706.3 1286.3 688.8 1302.0 640.0 C1317.7 591.2 1347.0 475.0 1356.0 442.0" stroke="#38e4b4"/><path d="M1131.0 1079.0 Q1217.7 860.9 1297.0 640.0 M1143.1 1079.0 Q1225.7 860.2 1301.3 638.8 M1155.2 1079.0 Q1233.7 859.4 1305.5 637.6 M1167.3 1079.0 Q1241.6 858.7 1309.8 636.4 M1179.4 1079.0 Q1249.6 858.0 1314.1 635.2 M1191.5 1079.0 Q1257.5 857.2 1318.3 634.0 M1203.6 1079.0 Q1265.4 856.5 1322.6 632.8 M1215.8 1079.0 Q1273.4 855.8 1326.9 631.6 M1227.9 1079.0 Q1281.3 855.1 1331.1 630.4 M1240.0 1079.0 Q1289.3 854.4 1335.4 629.2 M1252.1 1079.0 Q1297.2 853.8 1339.7 628.0 M1264.2 1079.0 Q1305.1 853.1 1343.9 626.8 M1276.3 1079.0 Q1313.0 852.4 1348.2 625.6 M1288.4 1079.0 Q1321.0 851.8 1352.5 624.4 M1300.5 1079.0 Q1328.9 851.1 1356.7 623.2 M1312.6 1079.0 Q1336.8 850.5 1361.0 622.0 M1324.7 1079.0 Q1353.3 757.5 1366.0 435.0 M1336.8 1079.0 Q1359.8 757.3 1367.6 434.9 M1348.9 1079.0 Q1366.3 757.1 1369.2 434.8 M1361.1 1079.0 Q1372.8 757.0 1370.9 434.7 M1373.2 1079.0 Q1379.3 756.8 1372.5 434.6 M1385.3 1079.0 Q1385.8 756.7 1374.1 434.5 M1397.4 1079.0 Q1392.3 756.5 1375.7 434.4 M1409.5 1079.0 Q1398.7 756.4 1377.3 434.3 M1421.6 1079.0 Q1405.2 756.3 1379.0 434.2 M1433.7 1079.0 Q1411.7 756.2 1380.6 434.1 M1445.8 1079.0 Q1418.2 756.1 1382.2 434.0 M1457.9 1079.0 Q1424.6 756.0 1383.8 434.0 M1470.0 1079.0 Q1431.1 756.0 1385.4 433.9 M1482.1 1079.0 Q1437.6 755.9 1387.0 433.8 M1494.2 1079.0 Q1444.1 755.9 1388.7 433.7 M1506.4 1079.0 Q1450.6 755.9 1390.3 433.6 M1518.5 1079.0 Q1457.1 755.9 1391.9 433.5 M1530.6 1079.0 Q1463.5 755.9 1393.5 433.4 M1542.7 1079.0 Q1470.0 755.9 1395.1 433.3 M1554.8 1079.0 Q1476.5 755.9 1396.8 433.2 M1566.9 1079.0 Q1483.0 756.0 1398.4 433.1 M1579.0 1079.0 Q1489.5 756.0 1400.0 433.0" stroke="#48f296"/></g>
  <defs><linearGradient id="bodyg" x1="0" y1="0" x2="0.3" y2="1">
<stop offset="0" stop-color="#1414d4"/><stop offset="0.3" stop-color="#1010c8"/><stop offset="0.6" stop-color="#0b0bac"/><stop offset="1" stop-color="#0a0a9c"/></linearGradient></defs>
<path d="M874.4 795.2 C875.3 794.0 876.4 791.5 879.0 791.5 C881.6 791.5 883.6 792.5 890.0 795.0 C896.4 797.5 903.3 800.2 917.4 806.7 C931.5 813.2 955.7 824.1 974.8 834.0 C993.9 843.9 1016.2 857.4 1032.0 866.0 C1047.8 874.6 1057.1 879.8 1069.4 885.5 C1081.7 891.2 1099.7 897.6 1105.6 900.3 C1111.5 903.0 1107.1 901.6 1105.0 901.6 C1102.9 901.6 1100.2 901.6 1093.0 900.0 C1085.8 898.4 1074.0 896.3 1061.5 892.0 C1049.0 887.7 1034.8 881.5 1018.0 874.0 C1001.2 866.5 979.7 856.7 960.5 847.0 C941.3 837.3 916.4 823.3 903.0 816.0 C889.6 808.7 884.9 805.8 880.0 803.0 C875.1 800.2 874.4 800.3 873.5 799.0 C872.6 797.7 873.5 796.5 874.4 795.2Z" fill="#08087e"/>
<path d="M1199.0 793.5 C1201.0 793.6 1203.4 794.2 1205.0 795.5 C1206.6 796.8 1208.0 798.4 1208.5 801.0 C1209.0 803.6 1210.1 805.2 1208.0 811.0 C1205.9 816.8 1201.3 826.5 1196.0 836.0 C1190.7 845.5 1182.5 858.7 1176.0 868.0 C1169.5 877.3 1161.8 886.3 1157.0 892.0 C1152.2 897.7 1151.3 900.4 1147.0 902.0 C1142.7 903.6 1132.7 903.3 1131.0 901.5 C1129.3 899.7 1132.7 897.8 1137.0 891.0 C1141.3 884.2 1150.2 872.3 1157.0 861.0 C1163.8 849.7 1172.7 833.2 1178.0 823.0 C1183.3 812.8 1186.5 804.7 1189.0 800.0 C1191.5 795.3 1191.3 796.1 1193.0 795.0 C1194.7 793.9 1197.0 793.4 1199.0 793.5Z" fill="#08087c"/>
<path d="M1066.1 610.2 C1070.4 609.8 1074.7 610.8 1078.0 612.5 C1081.3 614.2 1084.0 617.6 1085.8 620.5 C1087.5 623.4 1088.1 626.8 1088.5 630.0 C1088.9 633.2 1088.5 637.1 1088.1 640.0 C1087.6 642.9 1086.1 645.4 1085.8 647.2 C1085.5 649.0 1083.5 650.0 1086.0 651.0 C1088.5 652.0 1095.7 652.5 1100.7 653.5 C1105.7 654.5 1111.8 655.5 1116.0 657.0 C1120.2 658.5 1123.2 660.3 1126.0 662.5 C1128.8 664.7 1130.4 665.7 1133.0 670.0 C1135.6 674.3 1138.7 681.9 1141.7 688.1 C1144.7 694.3 1148.8 701.2 1151.1 707.0 C1153.4 712.8 1154.8 718.1 1155.8 722.8 C1156.8 727.5 1157.3 731.5 1157.4 735.4 C1157.5 739.3 1157.5 743.1 1156.5 746.0 C1155.5 748.9 1152.8 752.4 1151.1 752.7 C1149.4 753.0 1147.3 750.9 1146.4 748.0 C1145.5 745.1 1146.9 740.1 1145.6 735.4 C1144.3 730.7 1141.0 724.3 1138.5 719.6 C1136.0 714.9 1133.8 711.2 1130.6 707.0 C1127.4 702.8 1122.2 697.0 1119.6 694.4 C1117.0 691.8 1116.0 689.2 1114.9 691.3 C1113.9 693.4 1112.5 701.5 1113.3 707.0 C1114.1 712.5 1117.5 717.7 1119.6 724.0 C1121.7 730.3 1123.6 738.4 1126.0 745.0 C1128.4 751.6 1132.1 757.1 1133.9 763.6 C1135.7 770.1 1134.9 776.5 1137.0 784.1 C1139.1 791.7 1143.6 802.0 1146.5 809.3 C1149.4 816.6 1153.0 821.3 1154.4 828.1 C1155.8 834.9 1154.7 843.9 1155.0 850.2 C1155.3 856.5 1156.7 860.7 1156.5 866.0 C1156.3 871.3 1155.1 877.0 1154.0 882.0 C1152.9 887.0 1152.0 893.3 1150.0 896.0 C1148.0 898.7 1143.4 899.3 1142.0 898.0 C1140.6 896.7 1141.8 891.8 1141.5 888.0 C1141.2 884.2 1140.0 880.1 1140.2 875.4 C1140.5 870.7 1143.0 864.7 1143.0 860.0 C1143.0 855.3 1142.8 852.8 1140.2 847.0 C1137.6 841.2 1131.3 831.8 1127.6 825.0 C1123.9 818.2 1121.8 812.4 1118.1 806.1 C1114.4 799.8 1109.6 794.2 1105.6 787.2 C1101.6 780.2 1096.8 768.4 1094.0 764.0 C1091.2 759.6 1090.5 761.2 1089.0 761.0 C1087.5 760.8 1087.1 757.3 1085.1 763.0 C1083.1 768.7 1079.3 786.5 1077.2 795.0 C1075.1 803.5 1073.4 807.4 1072.5 814.0 C1071.6 820.6 1072.9 828.1 1072.0 834.4 C1071.1 840.7 1067.4 846.7 1067.0 852.0 C1066.6 857.3 1068.7 861.7 1069.4 866.0 C1070.1 870.3 1071.6 875.0 1071.0 878.0 C1070.4 881.0 1069.2 883.2 1066.0 884.0 C1062.8 884.8 1055.8 884.0 1052.0 883.0 C1048.2 882.0 1044.3 879.8 1043.0 878.0 C1041.7 876.2 1042.2 874.7 1044.0 872.0 C1045.8 869.3 1052.4 865.6 1054.0 862.0 C1055.6 858.4 1054.3 856.1 1053.6 850.2 C1052.9 844.3 1050.2 835.0 1049.7 826.6 C1049.2 818.2 1051.0 810.3 1050.5 799.8 C1050.0 789.3 1047.2 772.7 1046.5 763.6 C1045.8 754.5 1047.2 751.4 1046.5 745.0 C1045.8 738.6 1043.2 726.7 1042.0 725.0 C1040.8 723.3 1039.4 731.4 1039.0 735.0 C1038.6 738.6 1039.9 743.7 1039.4 746.4 C1038.9 749.1 1037.8 751.1 1036.2 751.1 C1034.6 751.1 1031.7 750.1 1029.9 746.4 C1028.1 742.7 1026.8 735.1 1025.2 729.1 C1023.6 723.1 1022.0 716.0 1020.5 710.2 C1019.0 704.4 1017.0 700.3 1016.5 694.4 C1016.0 688.5 1016.6 680.1 1017.5 675.0 C1018.4 669.9 1019.9 666.8 1022.0 664.0 C1024.1 661.2 1026.7 659.7 1030.0 658.0 C1033.3 656.3 1038.1 655.0 1042.0 654.0 C1045.9 653.0 1051.8 653.7 1053.5 651.9 C1055.2 650.1 1053.0 645.9 1051.9 643.0 C1050.9 640.1 1048.2 637.8 1047.2 634.6 C1046.2 631.4 1045.2 627.3 1046.0 624.0 C1046.8 620.7 1048.7 617.3 1052.0 615.0 C1055.3 612.7 1061.8 610.6 1066.1 610.2Z" fill="url(#bodyg)"/>
<path d="M1047 634 Q1066 628 1088 636" stroke="#0808a0" stroke-width="1.6" fill="none"/>
<path d="M1054 652 Q1068 664 1084 652 L1083 660 Q1068 672 1055 660 Z" fill="#0909a0" opacity="0.8"/>
<ellipse cx="1040" cy="680" rx="14" ry="12" fill="#1a1ae0" opacity="0.35"/>
<ellipse cx="1118" cy="672" rx="12" ry="9" fill="#1a1ae0" opacity="0.3"/>
<clipPath id="feetclip"><path d="M1025 868 L1165 868 L1165 905 L1025 905 Z"/></clipPath><path d="M858.5 1079.0 C865.1 1069.0 881.6 1044.0 898.1 1019.0 C914.6 994.0 938.9 957.8 957.5 929.0 C976.2 900.2 1001.3 859.8 1010.0 846.0 M870.7 1079.0 C877.1 1069.0 893.2 1044.0 909.2 1019.0 C925.2 994.0 947.9 957.7 966.8 929.0 C985.8 900.3 1013.5 860.4 1022.8 846.7 M883.0 1079.0 C889.2 1069.0 904.7 1044.0 920.3 1019.0 C935.9 994.0 957.1 957.6 976.3 929.0 C995.5 900.4 1025.7 860.9 1035.6 847.3 M895.2 1079.0 C901.3 1069.0 916.4 1044.0 931.5 1019.0 C946.6 994.0 966.5 957.5 985.9 929.0 C1005.4 900.5 1037.9 861.5 1048.3 848.0 M907.4 1079.0 C913.3 1069.0 928.0 1044.0 942.7 1019.0 C957.5 994.0 976.0 957.4 995.7 929.0 C1015.4 900.6 1050.2 862.1 1061.1 848.7 M919.7 1079.0 C925.4 1069.0 939.7 1044.0 954.0 1019.0 C968.4 994.0 985.6 957.3 1005.6 929.0 C1025.6 900.7 1062.5 862.6 1073.9 849.3 M931.9 1079.0 C937.5 1069.0 951.4 1044.0 965.4 1019.0 C979.3 994.0 995.4 957.2 1015.6 929.0 C1035.8 900.8 1074.8 863.2 1086.7 850.0 M944.1 1079.0 C949.6 1069.0 963.2 1044.0 976.8 1019.0 C990.4 994.0 1005.3 957.1 1025.8 929.0 C1046.2 900.9 1087.2 863.7 1099.4 850.7 M956.4 1079.0 C961.7 1069.0 975.0 1044.0 988.2 1019.0 C1001.5 994.0 1015.3 956.9 1036.0 929.0 C1056.7 901.1 1099.5 864.3 1112.2 851.3 M968.6 1079.0 C973.8 1069.0 986.7 1044.0 999.7 1019.0 C1012.6 994.0 1025.4 956.8 1046.3 929.0 C1067.2 901.2 1111.9 864.8 1125.0 852.0" clip-path="url(#feetclip)" fill="none" stroke="#38e4b4" stroke-width="1" shape-rendering="crispEdges"/><g fill="none" stroke-width="1" shape-rendering="crispEdges"><path d="M1038 852 q2 -4 0 -8 q-2 -3 1 -6" stroke="#e8e020"/><path d="M1052 848 q2 -4 0 -8 q-2 -3 1 -6" stroke="#f0a020"/><path d="M1066 850 q2 -4 0 -8 q-2 -3 1 -6" stroke="#d8e030"/><path d="M1090 846 q2 -4 0 -8 q-2 -3 1 -6" stroke="#f09020"/><path d="M1104 852 q2 -4 0 -8 q-2 -3 1 -6" stroke="#c8e040"/><path d="M1118 850 q2 -4 0 -8 q-2 -3 1 -6" stroke="#e0c020"/><path d="M1150 846 q2 -4 0 -8 q-2 -3 1 -6" stroke="#d0e030"/></g>
  <!-- legend -->
  <defs><linearGradient id="jet" x1="0" y1="0" x2="0" y2="1">
    <stop offset="0" stop-color="#ff0000"/><stop offset="0.25" stop-color="#ffff00"/><stop offset="0.5" stop-color="#00ff00"/><stop offset="0.75" stop-color="#00ffff"/><stop offset="1" stop-color="#0000ff"/>
  </linearGradient></defs>
  <rect x="1447" y="372" width="22" height="381" fill="url(#jet)"/>
  <rect x="1447" y="335" width="156" height="1" fill="#fff"/>
  <rect x="1447" y="757" width="156" height="1" fill="#fff"/>
  <path d="M1468.5 372.0H1479M1468.5 381.5H1479M1468.5 391.0H1479M1468.5 400.5H1479M1468.5 410.0H1479M1468.5 419.5H1479M1468.5 429.0H1479M1468.5 438.5H1479M1468.5 448.0H1479M1468.5 457.5H1479M1459.0 467.0H1479M1468.5 476.5H1479M1468.5 486.0H1479M1468.5 495.5H1479M1468.5 505.0H1479M1468.5 514.5H1479M1468.5 524.0H1479M1468.5 533.5H1479M1468.5 543.0H1479M1468.5 552.5H1479M1459.0 562.0H1479M1468.5 571.5H1479M1468.5 581.0H1479M1468.5 590.5H1479M1468.5 600.0H1479M1468.5 609.5H1479M1468.5 619.0H1479M1468.5 628.5H1479M1468.5 638.0H1479M1468.5 647.5H1479M1459.0 657.0H1479M1468.5 666.5H1479M1468.5 676.0H1479M1468.5 685.5H1479M1468.5 695.0H1479M1468.5 704.5H1479M1468.5 714.0H1479M1468.5 723.5H1479M1468.5 733.0H1479M1468.5 742.5H1479M1459.0 752.0H1479" stroke="#0f2a14" stroke-width="1" fill="none" shape-rendering="crispEdges"/>
  <text x="1364" y="351" font-family="Liberation Sans" font-size="20.5" fill="#000" stroke="#00bd55" stroke-width="0.45" letter-spacing="1.25">U (m/s) Magnitude</text>
  <g font-family="Liberation Sans" font-size="20.5" fill="#000" stroke="#00bd55" stroke-width="0.45" letter-spacing="0.5">
   <text x="1482" y="375.6">37.12</text>
   <text x="1482" y="471">33.408</text>
   <text x="1482" y="566.5">29.7</text>
   <text x="1482" y="661">25.992</text>
   <text x="1482" y="756">22.28</text>
  </g>
  <!-- axes -->
  <line x1="740.5" y1="952" x2="740.5" y2="900" stroke="#20e020" stroke-width="1.2"/>
  <path d="M736 901 L740.5 887 L745 901 Z" fill="#10c810"/>
  <line x1="745" y1="954.5" x2="798" y2="954.5" stroke="#a01010" stroke-width="1.4"/>
  <path d="M796 950 L810 954.5 L796 959 Z" fill="#e01010"/>
  <circle cx="743.5" cy="954" r="4.5" fill="#f2d21e"/>
  <g font-family="Liberation Sans" font-size="18" fill="#fff">
   <text x="743" y="901.5">Z</text><text x="746" y="955.5">Y</text><text x="799" y="956">X</text>
  </g>
</svg>
<!-- report an issue -->
<div class="a" style="left:1750px;top:1048px;width:140px;height:31px;background:#005b9b;border-top:1px solid #0a78c0;border-radius:3px 3px 0 0"></div>
<svg class="a" style="left:1760px;top:1056px" width="24" height="16" viewBox="0 0 24 16"><ellipse cx="11" cy="8" rx="10.5" ry="7.5" fill="#fff"/><circle cx="11" cy="8" r="4" fill="#0c5f9a"/><circle cx="11" cy="8" r="2.2" fill="#fff"/><path d="M17 12 L22 16 L20 11 Z" fill="#fff"/></svg>
<div class="t" style="left:1794px;top:1059px;font-size:12px;color:#fff;font-weight:bold;letter-spacing:-0.3px">Report an issue</div>


</body></html>
